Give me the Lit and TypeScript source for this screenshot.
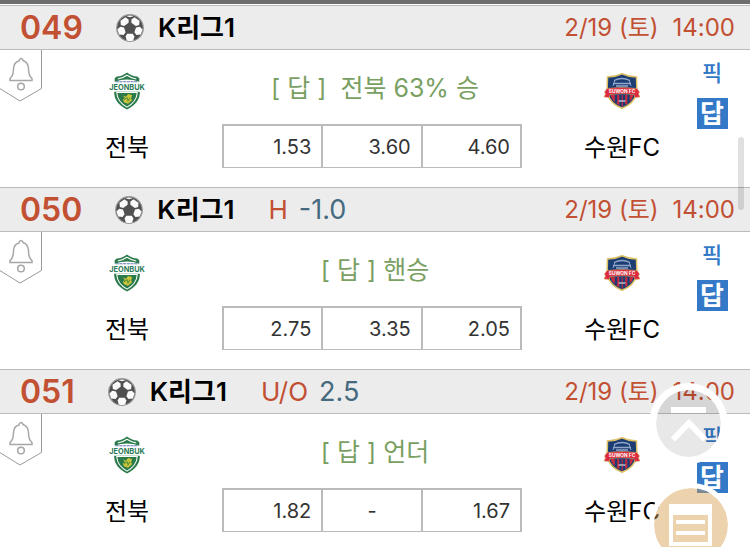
import { LitElement, html, css, svg, nothing } from "lit";
import { customElement, property } from "lit/decorators.js";

interface Game {
  no: string;
  league: string;
  kind?: string;
  line?: string;
  when: string;
  time: string;
  home: string;
  away: string;
  tip: string;
  odds: string[];
}

const GAMES: Game[] = [
  { no: "049", league: "K리그1", when: "2/19 (토)", time: "14:00", home: "전북", away: "수원FC", tip: "[ 답 ]\u00a0 전북 63% 승", odds: ["1.53", "3.60", "4.60"] },
  { no: "050", league: "K리그1", kind: "H", line: "-1.0", when: "2/19 (토)", time: "14:00", home: "전북", away: "수원FC", tip: "[ 답 ] 핸승", odds: ["2.75", "3.35", "2.05"] },
  { no: "051", league: "K리그1", kind: "U/O", line: "2.5", when: "2/19 (토)", time: "14:00", home: "전북", away: "수원FC", tip: "[ 답 ] 언더", odds: ["1.82", "-", "1.67"] },
];

const ball = svg`
  <circle cx="14" cy="14" r="13.300" fill="#505050" stroke="#999" stroke-width="1.200"/>
  <g fill="#fbfbfb">
    <path d="M4.500 6.800L9.500 3.200 12.600 5.400V8.800L8.200 12 4.800 11z"/>
    <path d="M23.500 6.800L18.500 3.200 15.400 5.400V8.800L19.800 12 23.200 11z"/>
    <path d="M1.400 15.600L4.200 12.800 8 13.600 9.600 18.200 7.600 21 3.200 20.400z"/>
    <path d="M26.600 15.600L23.800 12.800 20 13.600 18.400 18.200 20.400 21 24.800 20.400z"/>
    <path d="M11.200 19.800h5.600L18.400 22.600 17.200 26.400Q14 27.400 10.800 26.400L9.600 22.600z"/>
    <path d="M10.500 2.200Q14 .8 17.500 2.200L14 3.200z"/>
  </g>`;

const jeonbuk = svg`
  <path d="M8 4.500Q14 4 18 .5 22 4 28 4.500L30 6v3.500Q18 5 6 9.500V6z" fill="#2b7a4b"/>
  <path d="M9 6.800Q14 6 18 3.200 22 6 27 6.800" fill="none" stroke="#fff"/>
  <path d="M7 9.500h22" stroke="#6578b5" stroke-width="1.200" stroke-dasharray="3 .6"/>
  <path d="M5.500 19h25Q31 30 18 36.500 5 30 5.500 19z" fill="#2b7a4b"/>
  <path d="M8 20h20Q27.500 29 18 34.200 8.500 29 8 20z" fill="none" stroke="#fff"/>
  <path d="M14 23l3 1 2-2.500 4 1-1 3 1 2-4 3.500-4-1.500-1-3 2-1z" fill="#c9c43a"/>
  <path d="M15 27l3-2 1 3 2-3" fill="none" stroke="#5c9137"/>
  <path d="M1 11h34v8H1z" fill="#fff"/>
  <text x="18" y="17.800" text-anchor="middle" font-size="7.200" font-weight="700" fill="#2b7a5a">JEONBUK</text>`;

const suwon = svg`
  <path d="M4.500 4Q12 4 19 .7 26 4 33.500 4L34 20Q31 30.500 19 35.300 7 30.500 4 20z" fill="#1c3d74" stroke="#dcc063" stroke-width="1.500"/>
  <path d="M11 7.500q8-4 16 0M10 10.500h18M13 13h12" fill="none" stroke="#8fa6c8" stroke-width="1.300"/>
  <path d="M12 7l-2 6M26 7l2 6" stroke="#8fa6c8"/>
  <path d="M7.500 22h23Q28.500 29.500 19 33.800 9.500 29.500 7.500 22z" fill="#c92a40"/>
  <path d="M13 22v8M17.500 22v11M21 22v11M25.500 22v8" stroke="#1c3d74" stroke-width="2.400"/>
  <path d="M15.500 28h7" stroke="#d8dce6" stroke-width="1.200"/>
  <path d="M1.500 19l2.500-3.500Q19 13.500 34 15.500l2.500 3.500-1 2 1.500 3-5 .5-1-3Q19 20 7 21.500l-1 3-5-.5 1.500-3z" fill="#dc2a40" stroke="#dcaa63" stroke-width=".6"/>
  <text x="19" y="19.800" text-anchor="middle" font-size="4.800" font-weight="700" fill="#fff">SUWON FC</text>`;

@customElement("game-row")
export class GameRow extends LitElement {
  @property({ attribute: false }) game!: Game;

  static styles = css`
    :host { display: block; color: #111; }
    header {
      display: flex; align-items: center; height: 43px; padding: 0 15px 0 20px; line-height: 36px;
      background: #ececec; border-top: 1px solid #bbb; border-bottom: 1px solid #bbb;
    }
    .no { font-size: 32px; font-weight: 600; color: #c25033; margin-right: 33px; }
    .ball { width: 28px; height: 28px; margin-right: 14px; }
    .league { font-size: 26px; font-weight: 600; color: #000; margin-right: 34px; }
    .kind { font-size: 26px; color: #c25033; margin-right: 11px; }
    .line { font-size: 27px; color: #456a7f; }
    .when { margin-left: auto; font-size: 24px; color: #c25033; white-space: nowrap; }
    .time { margin-left: 14px; }
    .body {
      display: grid; grid-template-columns: 64px 126fr 364fr 136fr 44px;
      padding-right: 16px; height: 137px; background: #fff;
    }
    button { border: 0; padding: 0; background: none; font: inherit; cursor: pointer; }
    .alarm { justify-self: start; align-self: start; }
    .alarm svg { display: block; width: 42px; height: 52px; }
    .team { display: flex; flex-direction: column; align-items: center; padding-top: 22px; gap: 22px; }
    .team svg { width: 38px; height: 38px; font-family: Inter, "Liberation Sans", sans-serif; }
    .name { font-size: 24px; line-height: 32px; white-space: nowrap; color: #000; }
    .mid { display: flex; flex-direction: column; align-items: center; padding-top: 20px; }
    .tip { font-size: 25px; line-height: 36px; margin: 0 0 18px; padding-left: 6px; color: #7a9f62; white-space: nowrap; }
    table { width: 300px; border-collapse: collapse; table-layout: fixed; }
    td {
      height: 42px; padding: 2px 10px 0; text-align: right; font-size: 20px; line-height: 28px; color: #333;
      border: 2px solid #bbb; border-bottom-width: 1px; box-sizing: border-box;
    }
    .none { text-align: center; }
    .picks { display: flex; flex-direction: column; align-items: center; padding-top: 8px; gap: 10px; }
    .pick { font-size: 22px; line-height: 30px; font-weight: 500; color: #3379c7; }
    .answer { width: 31px; height: 31px; font-size: 26px; line-height: 30px; font-weight: 700; color: #fff; background: #3379c7; }
  `;

  render() {
    const g = this.game;
    return html`
      <header>
        <span class="no">${g.no}</span>
        <svg class="ball" viewBox="0 0 28 28" aria-hidden="true">${ball}</svg>
        <span class="league">${g.league}</span>
        ${g.kind ? html`<span class="kind">${g.kind}</span><span class="line">${g.line}</span>` : nothing}
        <span class="when">${g.when}<span class="time">${g.time}</span></span>
      </header>
      <div class="body">
        <button class="alarm" aria-label="알림">
          <svg viewBox="0 0 42 52" fill="none" stroke="#999">
            <path d="M41.500 0v38.500L20 51-1 38" />
            <path d="M19 11q0-2 2-2.500 2 .5 2 2 5 1.500 5.500 8 0 7.500 3.500 10v2H10v-2q3.500-2.500 3.500-10 .5-6.500 5.500-7.500z" stroke-width="1.500" stroke="#a6a6a6"/>
            <circle cx="21" cy="36.500" r="3.300" stroke-width="1.500" stroke="#a6a6a6"/>
          </svg>
        </button>
        <div class="team">
          <svg viewBox="0 0 36 37" aria-hidden="true">${jeonbuk}</svg>
          <span class="name">${g.home}</span>
        </div>
        <div class="mid">
          <p class="tip">${g.tip}</p>
          <table><tbody><tr>
            ${g.odds.map((o) => html`<td class=${o === "-" ? "none" : "odd"}>${o}</td>`)}
          </tr></tbody></table>
        </div>
        <div class="team">
          <svg viewBox="0 0 38 36" aria-hidden="true">${suwon}</svg>
          <span class="name">${g.away}</span>
        </div>
        <div class="picks">
          <button class="pick">픽</button>
          <button class="answer">답</button>
        </div>
      </div>`;
  }
}

@customElement("app-root")
export class AppRoot extends LitElement {
  static styles = css`
    :host {
      display: block; position: relative; height: 100vh; overflow: hidden; background: #fff;
      font-family: Inter, "Noto Sans CJK KR", sans-serif;
    }
    .list {
      box-sizing: border-box; height: 100%; overflow-y: auto; scrollbar-width: none;
      border-top: 4px solid #6e6e6e; padding-top: 1px;
    }
    .thumb {
      position: absolute; right: 6px; top: 137px; width: 6px; height: 73px;
      border-radius: 3px; background: rgba(0, 0, 0, 0.12);
    }
    .fab { position: absolute; padding: 0; border-radius: 50%; background-clip: padding-box; cursor: pointer; }
    .fab svg { display: block; width: 100%; height: 100%; }
    .up { right: 22px; bottom: 83px; width: 79px; height: 81px; border: 7px solid #fff; background-color: rgba(0, 0, 0, 0.09); }
    .memo { right: 17px; bottom: -20px; width: 84px; height: 84px; border: 5px solid #fff; background-color: rgba(215, 155, 75, 0.45); }
  `;

  render() {
    return html`
      <main class="list">
        ${GAMES.map((g) => html`<game-row .game=${g}></game-row>`)}
      </main>
      <div class="thumb"></div>
      <button class="fab up" aria-label="맨 위로">
        <svg viewBox="0 0 65 67" fill="none" stroke="#fff" stroke-width="6">
          <path d="M15 20h35M17 49.500l16-16.500 16 16.500"/>
        </svg>
      </button>
      <button class="fab memo" aria-label="메모">
        <svg viewBox="0 0 74 74" fill="#fff">
          <path fill-rule="evenodd" d="M15 16h43v42H15zM19 27v27h35V27z"/>
          <path d="M22 32h29v4H22zM22 43h29v4H22z"/>
        </svg>
      </button>`;
  }
}
